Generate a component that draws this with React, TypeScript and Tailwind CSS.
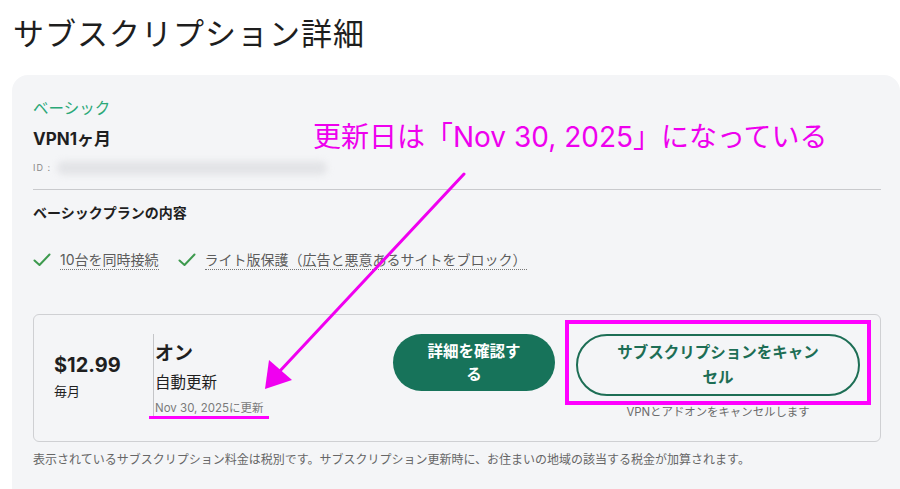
const jp = { fontFamily: '"Inter", "Noto Sans CJK JP", sans-serif' }

function Check() {
  return (
    <svg width="18" height="14" viewBox="0 0 18 14" fill="none" className="shrink-0">
      <path d="M1.5 7.5 L6.5 12 L16.5 1.5" stroke="#3d9a4e" strokeWidth="2" strokeLinecap="round" strokeLinejoin="round" />
    </svg>
  )
}

export default function App() {
  return (
    <div className="relative min-h-[489px] w-[900px] overflow-hidden bg-white text-[#1f1f1f]" style={jp}>
      {/* 見出し */}
      <h1 className="pl-[13px] pt-[14px] text-[31px] font-normal leading-[40px] tracking-[1px] text-[#1e1e1e]">
        サブスクリプション詳細
      </h1>

      {/* カード */}
      <div className="ml-[12px] mt-[21px] rounded-2xl bg-[#f4f5f7] pb-[40px] pl-[21px] pr-[19px] pt-[24px]">
        <p className="text-[15.5px] leading-[20px] text-[#2aa877]">ベーシック</p>
        <p className="mt-[9px] text-[17px] font-bold leading-[22px]">VPN1ヶ月</p>
        <div className="mt-[9px] flex h-[18px] items-center gap-[6px]">
          <span className="text-[9px] tracking-[1px] text-[#888]">ID :</span>
          <div className="h-[14px] w-[270px] rounded-full bg-[#e3e4e7] blur-[3px]" />
        </div>
        <div className="mt-[12px] h-px bg-[#c9cacd]" />

        <p className="mt-[13px] text-[14px] font-bold leading-[20px]">ベーシックプランの内容</p>
        <div className="mt-[26px] flex h-[22px] items-center text-[14px] text-[#5c5c5c]">
          <Check />
          <span className="ml-[9px] border-b border-dotted border-[#777] leading-[18px]">10台を同時接続</span>
          <span className="ml-[19px]"><Check /></span>
          <span className="ml-[9px] border-b border-dotted border-[#777] leading-[18px]">
            ライト版保護（広告と悪意あるサイトをブロック）
          </span>
        </div>

        {/* 料金ボックス */}
        <div className="mt-[43px] flex h-[128px] items-start rounded-md border border-[#cfd0d3] pl-[20px] pr-[20px] pt-[19px]">
          <div className="w-[99px] pt-[18px]">
            <p className="text-[20px] font-bold leading-[26px]">$12.99</p>
            <p className="mt-[3px] text-[13px] leading-[20px]">毎月</p>
          </div>
          <div className="h-[85px] w-px bg-[#c4c5c8]" />
          <div className="pl-[1px] pt-[8px]">
            <p className="text-[19px] font-bold leading-[24px]">オン</p>
            <p className="mt-[6px] text-[15.5px] leading-[22px]">自動更新</p>
            <p className="relative mt-[6px] text-[11.5px] leading-[16px] text-[#7a7a7a]">
              Nov 30, 2025に更新
              <span className="absolute -left-[6px] -right-[6px] top-[16px] h-[3px] bg-[#ff00ff]" />
            </p>
          </div>

          <div className="ml-auto flex items-start gap-[21px]">
            <button className="flex h-[57px] w-[162px] flex-col items-center justify-center rounded-full bg-[#17735a] text-[15.5px] font-bold leading-[23px] text-white">
              <span>詳細を確認す</span>
              <span>る</span>
            </button>
            <div className="flex flex-col items-center">
              <div className="relative">
                <button className="flex h-[62px] w-[284px] flex-col items-center justify-center rounded-full border-2 border-[#1d6e55] text-[15.5px] font-bold leading-[25px] text-[#1d6e55]">
                  <span>サブスクリプションをキャン</span>
                  <span>セル</span>
                </button>
                <div className="pointer-events-none absolute -bottom-[9px] -left-[11px] -right-[11px] -top-[14px] border-4 border-[#ff00ff]" />
              </div>
              <p className="mt-[8px] text-[11.4px] leading-[16px] text-[#6b6b6b]">VPNとアドオンをキャンセルします</p>
            </div>
          </div>
        </div>

        <p className="mt-[9px] text-[12px] leading-[18px] text-[#666]">
          表示されているサブスクリプション料金は税別です。サブスクリプション更新時に、お住まいの地域の該当する税金が加算されます。
        </p>
      </div>

      {/* 注釈 */}
      <p className="absolute left-[313px] top-[119px] text-[28px] leading-[36px] text-[#ee00ee]">
        更新日は「Nov 30, 2025」になっている
      </p>
      <svg className="pointer-events-none absolute left-0 top-0" width="900" height="489">
        <line x1="464" y1="174" x2="279" y2="372" stroke="#f000f0" strokeWidth="3" strokeLinecap="round" />
        <polygon points="265,389 269,360 292,380" fill="#f000f0" />
      </svg>
    </div>
  )
}
